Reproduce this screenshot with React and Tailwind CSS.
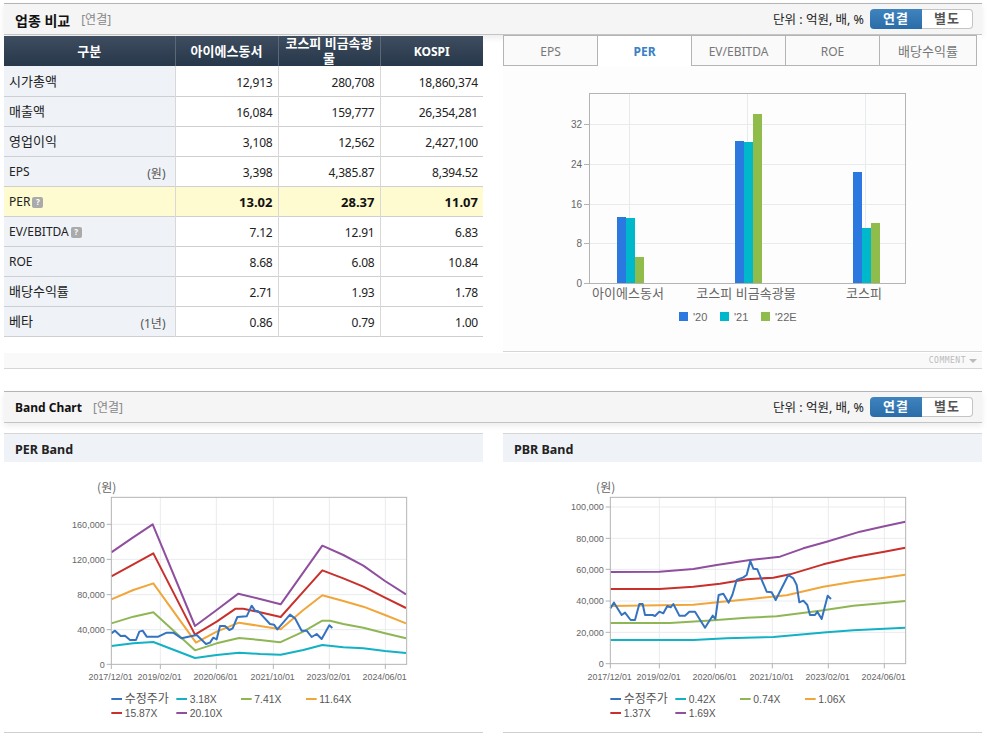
const sans = '"Noto Sans","Noto Sans CJK KR",sans-serif';

const Unit = () => (
  <div className="flex items-center">
    <span className="text-[12.5px] text-[#222] mr-[6px] pt-[2px]">단위 : 억원, 배, %</span>
    <div className="flex h-[20px] w-[103px] text-[13px] font-bold">
      <span className="w-[52px] flex items-center justify-center rounded-l-[4px] text-white bg-gradient-to-b from-[#3f84bf] to-[#2a6ca8] tracking-[1px]">연결</span>
      <span className="flex-1 flex items-center justify-center rounded-r-[4px] border border-l-0 border-[#c4c4c4] bg-white text-[#555] tracking-[1px]">별도</span>
    </div>
  </div>
);

const Header = ({ title, titleClass, subGap }) => (
  <div className="h-[32px] ml-1 w-[978px] flex items-center justify-between pl-[11px] pr-[9px] bg-[#f5f5f5] border-t border-b border-t-[#b4b4b4] border-b-[#c4c4c4] shadow-[0_3px_6px_rgba(0,0,0,0.08)]">
    <div className="flex items-center pt-[2px]">
      <span className={`font-bold text-[#111] ${titleClass}`}>{title}</span>
      <span className={`text-[12px] text-[#888] ${subGap}`}>[연결]</span>
    </div>
    <Unit />
  </div>
);

const Q = () => (
  <span className="inline-flex items-center justify-center w-[11px] h-[11px] rounded-[2px] bg-[#aaaaaa] text-white text-[8px] font-bold ml-[2px] align-[1px]">?</span>
);

const rows = [
  ['시가총액', '', '12,913', '280,708', '18,860,374'],
  ['매출액', '', '16,084', '159,777', '26,354,281'],
  ['영업이익', '', '3,108', '12,562', '2,427,100'],
  ['EPS', '(원)', '3,398', '4,385.87', '8,394.52'],
  ['PER', '', '13.02', '28.37', '11.07'],
  ['EV/EBITDA', '', '7.12', '12.91', '6.83'],
  ['ROE', '', '8.68', '6.08', '10.84'],
  ['배당수익률', '', '2.71', '1.93', '1.78'],
  ['베타', '(1년)', '0.86', '0.79', '1.00'],
];

const CompareTable = () => (
  <table className="w-[479px] table-fixed border-collapse text-[12px] text-[#222]">
    <colgroup>
      <col className="w-[171px]" /><col className="w-[103px]" /><col className="w-[102px]" /><col className="w-[103px]" />
    </colgroup>
    <thead>
      <tr className="h-[30px] bg-gradient-to-b from-[#3e4d5f] to-[#27384a] text-white text-[13px] font-bold leading-[15px]">
        <th className="border-r border-[#5b6876]">구분</th>
        <th className="border-r border-[#5b6876]">아이에스동서</th>
        <th className="border-r border-[#5b6876]">코스피 비금속광<br />물</th>
        <th className="text-[12px]">KOSPI</th>
      </tr>
    </thead>
    <tbody>
      {rows.map((r) => {
        const hi = r[0] === 'PER';
        const kr = /[가-힣]/.test(r[0]);
        return (
          <tr key={r[0]} className={`h-[30px] border-b border-[#cfcfd2] ${hi ? 'bg-[#fffbd0]' : ''}`}>
            <td className={`px-[5px] pt-[2px] border-r border-[#d8d8d8] ${hi ? '' : 'bg-[#eff2f7]'}`}>
              <div className="flex items-center justify-between">
                <span className={kr ? 'text-[13px]' : ''}>{r[0]}{(hi || r[0] === 'EV/EBITDA') && <Q />}</span>
                {r[1] && <span className="text-[12px] text-[#555] mt-[3px] mr-[4px]">{r[1]}</span>}
              </div>
            </td>
            {r.slice(2).map((v, i) => (
              <td key={i} className={`text-right pr-[5px] pt-[4px] ${i < 2 ? 'border-r border-[#d8d8d8]' : ''} ${hi ? 'font-bold text-[13px] text-[#111]' : 'tracking-[-0.2px]'}`}>{v}</td>
            ))}
          </tr>
        );
      })}
    </tbody>
  </table>
);

const tabs = [
  ['EPS', 'w-[95px] border-l'],
  ['PER', 'w-[94px]'],
  ['EV/EBITDA', 'w-[94px]'],
  ['ROE', 'w-[94px]'],
  ['배당수익률', 'w-[97px] text-[13px]'],
];

const Tabs = () => (
  <div className="flex h-[31px] w-[474px] text-[12px] text-[#777] border-t border-[#b4b4b4]">
    {tabs.map(([t, cls]) => (
      <div
        key={t}
        className={`flex items-center justify-center pt-[2px] border-[#b4b4b4] border-r ${cls} ${t === 'PER' ? 'bg-white text-[#3b80c4] font-bold border-b-0' : 'bg-[#fafafa] border-b'}`}
      >
        {t}
      </div>
    ))}
  </div>
);

const AxisText = (p) => <text fontFamily='"Liberation Sans","Noto Sans CJK KR",sans-serif' fontSize="12" fill="#666" {...p} />;

const PerBar = () => {
  const groups = [
    { x: 617, vals: [396, 399, 516] },
    { x: 735, vals: [168, 171, 87] },
    { x: 853, vals: [261, 429, 414] },
  ];
  const cols = ['#2b78e0', '#00b8cc', '#8fbc4a'];
  return (
    <svg width="479" height="285" viewBox="503 66 479 285" className="block">
      {[124.5, 164.5, 204.5, 243.5].map((y) => <line key={y} x1="589" x2="906" y1={y} y2={y} stroke="#e8ebee" />)}
      {[629.5, 747.5, 865.5].map((x) => <line key={x} y1="93" y2="283" x1={x} x2={x} stroke="#e8ebee" />)}
      {groups.map((g) => g.vals.map((v, i) => {
        const top = 85 + v / 3;
        return <rect key={i} x={g.x + i * 9} y={top} width="9" height={283 - top} fill={cols[i]} />;
      }))}
      <rect x="589.5" y="93.5" width="316" height="190" fill="none" stroke="#b4b4b4" />
      {[['32', 124], ['24', 164], ['16', 204], ['8', 243], ['0', 283]].map(([t, y]) => (
        <g key={t}>
          <line x1="584" x2="589" y1={y + 0.5} y2={y + 0.5} stroke="#b4b4b4" />
          <AxisText x="582" y={y + 4} textAnchor="end" fontSize="10">{t}</AxisText>
        </g>
      ))}
      <AxisText x="628" y="298" textAnchor="middle" fontSize="13">아이에스동서</AxisText>
      <AxisText x="746" y="298" textAnchor="middle" fontSize="13">코스피 비금속광물</AxisText>
      <AxisText x="864" y="298" textAnchor="middle" fontSize="13">코스피</AxisText>
      {[["'20", 679, 0], ["'21", 720, 1], ["'22E", 761, 2]].map(([t, x, i]) => (
        <g key={t}>
          <rect x={x} y="312" width="9" height="9" fill={cols[i]} />
          <AxisText x={x + 14} y="321" fontSize="11">{t}</AxisText>
        </g>
      ))}
    </svg>
  );
};

const C = { blue: '#3573c0', teal: '#12b1c4', green: '#8fb655', orange: '#f0a63a', red: '#c8302c', purple: '#8f4f9e' };

const per = {
  frame: [124, 1010, 82, 583],
  grid: [[163, '160,000'], [268, '120,000'], [374, '80,000'], [479, '40,000'], [583, '0']],
  vs: [271, 439, 610, 778, 946],
  xl: [124, 271, 439, 610, 778, 946],
  unitX: 110,
  legend: [['수정주가', C.blue, 124, 687], ['3.18X', C.teal, 319, 687], ['7.41X', C.green, 513, 687], ['11.64X', C.orange, 708, 687], ['15.87X', C.red, 124, 729], ['20.10X', C.purple, 319, 729]],
  lines: [
    [C.teal, '124,528 190,520 250,516 375,564 440,555 507,548 570,552 632,554 700,540 757,525 820,532 880,535 945,543 1008,549'],
    [C.green, '124,460 190,440 250,427 375,541 440,520 507,504 570,510 630,517 700,485 757,452 780,452 820,462 880,473 945,490 1008,505'],
    [C.orange, '124,388 190,360 250,340 378,518 440,485 507,458 570,468 632,478 700,420 757,376 820,393 880,410 945,435 1008,460'],
    [C.red, '124,319 190,283 250,250 375,494 440,455 497,416 520,416 570,427 632,441 700,365 757,301 820,325 880,350 945,383 1008,414'],
    [C.purple, '124,247 185,205 248,163 375,468 440,420 505,371 570,387 632,403 757,227 820,255 880,287 945,333 1008,373'],
    [C.blue, '124,490 135,482 152,498 165,497 180,510 198,510 208,485 218,482 230,500 265,500 290,488 310,488 335,505 355,500 380,495 408,522 420,518 430,503 440,508 450,468 465,468 478,480 488,475 502,441 530,439 545,407 555,422 565,424 600,462 612,464 622,478 660,434 675,445 695,482 710,482 725,501 740,492 755,507 778,466 787,474'],
  ],
};

const pbr = {
  frame: [151, 1037, 82, 581],
  grid: [[111, '100,000'], [205, '80,000'], [298, '60,000'], [393, '40,000'], [487, '20,000'], [581, '0']],
  vs: [298, 466, 637, 805, 973],
  xl: [151, 298, 466, 637, 805, 973],
  unitX: 137,
  legend: [['수정주가', C.blue, 151, 687], ['0.42X', C.teal, 346, 687], ['0.74X', C.green, 540, 687], ['1.06X', C.orange, 735, 687], ['1.37X', C.red, 151, 729], ['1.69X', C.purple, 346, 729]],
  lines: [
    [C.teal, '151,510 400,510 500,505 640,501 800,487 880,481 1036,473'],
    [C.green, '151,459 330,459 440,452 560,443 650,439 780,422 880,407 973,399 1036,393'],
    [C.orange, '151,408 400,404 480,396 580,386 680,376 790,350 880,335 973,323 1036,314'],
    [C.red, '151,357 298,357 400,350 480,341 560,328 640,323 690,313 790,283 880,262 973,245 1036,233'],
    [C.purple, '151,306 298,305 400,297 470,285 570,270 660,260 730,235 800,215 900,185 973,169 1036,155'],
    [C.blue, '151,415 162,398 185,435 195,428 212,450 225,450 238,402 248,402 255,435 278,435 285,438 298,425 310,430 322,408 332,412 340,402 358,437 375,437 388,425 405,425 435,473 458,437 466,447 476,375 490,371 506,398 517,375 530,330 550,322 560,315 571,273 580,296 592,298 620,365 635,367 647,390 685,315 700,325 710,345 718,397 730,392 742,405 750,435 765,435 772,425 785,447 803,377 813,387'],
  ],
};

const labels = ['2017/12/01', '2019/02/01', '2020/06/01', '2021/10/01', '2023/02/01', '2024/06/01'];
const latin = '"Liberation Sans",sans-serif';

const BandSvg = ({ d }) => {
  const [x0, x1, y0, y1] = d.frame;
  return (
    <svg width="360" height="262" viewBox="0 0 1080 786" className="block">
      {d.grid.slice(0, -1).map(([y]) => <line key={y} x1={x0} x2={x1} y1={y} y2={y} stroke="#e8ebee" strokeWidth="3" />)}
      {d.vs.map((x) => <line key={x} x1={x} x2={x} y1={y0} y2={y1} stroke="#e8ebee" strokeWidth="3" />)}
      {d.lines.map(([c, p]) => <polyline key={c} points={p} fill="none" stroke={c} strokeWidth="6" strokeLinejoin="round" />)}
      <rect x={x0} y={y0} width={x1 - x0} height={y1 - y0} fill="none" stroke="#b4b4b4" strokeWidth="3" />
      {d.xl.map((x) => <line key={x} x1={x} x2={x} y1={y1} y2={y1 + 14} stroke="#b4b4b4" strokeWidth="3" />)}
      {d.grid.map(([y, t]) => (
        <g key={t}>
          <line x1={x0 - 14} x2={x0} y1={y} y2={y} stroke="#b4b4b4" strokeWidth="3" />
          <text x={x0 - 20} y={y + 10} textAnchor="end" fontSize="27" fill="#666" fontFamily={latin}>{t}</text>
        </g>
      ))}
      {labels.map((t, i) => (
        <text key={t} x={d.xl[i] - 2} y={629} textAnchor="middle" fontSize="26.5" fill="#666" fontFamily={latin}>{t}</text>
      ))}
      <text x={d.unitX} y={66} textAnchor="middle" fontSize="36" fill="#666" fontFamily='"Noto Sans CJK KR",sans-serif'>(원)</text>
      {d.legend.map(([t, c, x, y]) => (
        <g key={t}>
          <rect x={x} y={y - 3} width="32" height="6" fill={c} />
          <text x={x + 40} y={y + 11} fontSize={t === '수정주가' ? 36 : 31} fill="#555" fontFamily='"Liberation Sans","Noto Sans CJK KR",sans-serif'>{t}</text>
        </g>
      ))}
    </svg>
  );
};

const BandPanel = ({ title, d, svgShift }) => (
  <div className="w-[479px] border-b border-[#cfcfcf]">
    <div className="h-[29px] flex items-center pl-[11px] pt-[4px] bg-[#eff2f7] border-t border-[#d6d6d6] text-[12.5px] font-bold text-[#222]">{title}</div>
    <div className={`pt-[8px] ${svgShift}`}><BandSvg d={d} /></div>
  </div>
);

export default function App() {
  return (
    <div className="w-[987px] h-[739px] bg-white overflow-hidden pt-[3px]" style={{ fontFamily: sans }}>
      <Header title="업종 비교" titleClass="text-[14px]" subGap="ml-[11px]" />
      <div className="ml-1 flex gap-5">
        <div className="w-[479px] pt-px">
          <CompareTable />
        </div>
        <div className="w-[479px] border-b border-[#d6d6d6] bg-[#fdfdfd]">
          <Tabs />
          <PerBar />
        </div>
      </div>
      <div className="ml-1 mt-px w-[978px] flex items-center justify-end h-[16px] pr-[5px] bg-[#f9f9f9] border-b border-[#d6d6d6]">
        <span className="text-[8px] text-[#bbb] tracking-[0.5px]" style={{ fontFamily: '"DejaVu Sans Mono",monospace' }}>COMMENT</span>
        <span className="ml-[3px] w-0 h-0 border-x-[4px] border-x-transparent border-t-[4px] border-t-[#bbb]" />
      </div>
      <div className="h-[22px]" />
      <Header title="Band Chart" titleClass="text-[12px]" subGap="ml-[11px]" />
      <div className="ml-1 flex gap-5 mt-[10px]">
        <BandPanel title="PER Band" d={per} svgShift="ml-[66px]" />
        <BandPanel title="PBR Band" d={pbr} svgShift="ml-[57px]" />
      </div>
    </div>
  );
}
